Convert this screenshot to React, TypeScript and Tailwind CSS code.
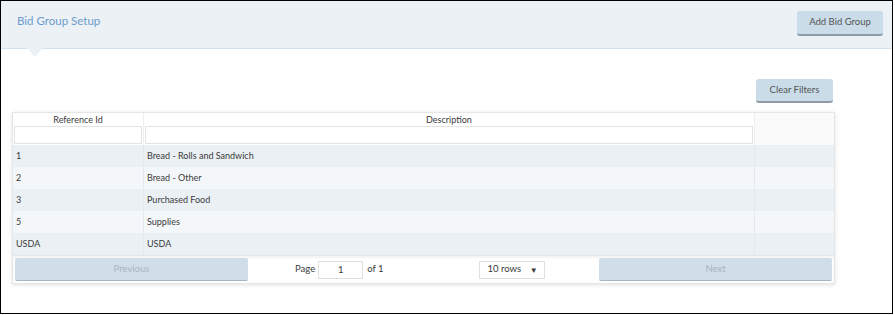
const rows = [
  { id: '1', desc: 'Bread - Rolls and Sandwich' },
  { id: '2', desc: 'Bread - Other' },
  { id: '3', desc: 'Purchased Food' },
  { id: '5', desc: 'Supplies' },
  { id: 'USDA', desc: 'USDA' },
];

export default function App() {
  return (
    <div className="w-[893px] h-[314px] border border-black bg-white font-['Lato','Open_Sans',sans-serif] text-[#3a3a3a]">
      {/* Header */}
      <div className="relative h-[48px] bg-[#ecf1f6] border-b border-[#d5e2ec] flex items-start justify-between pl-[16px] pr-[9px]">
        <h1 className="mt-[11px] text-[11.5px] text-[#6b9ccc]">Bid Group Setup</h1>
        <button className="mt-[10px] h-[25px] w-[86px] rounded-[3px] bg-[#c9dce8] border-b-2 border-[#8e9ba5] text-[9.5px] text-[#555]">
          Add Bid Group
        </button>
        <div className="absolute left-[26px] top-full w-0 h-0 border-l-[8px] border-r-[8px] border-t-[9px] border-l-transparent border-r-transparent border-t-[#ecf1f6]" />
      </div>

      <div className="w-[845px] px-[11px] pt-[30px]">
        <div className="flex justify-end pr-[2px]">
          <button className="h-[24px] w-[77px] rounded-[3px] bg-[#c9dce8] border-b-2 border-[#8e9ba5] text-[9.5px] text-[#555]">
            Clear Filters
          </button>
        </div>

        <div className="mt-[9px] w-[823px] border border-[#e6e6e6] shadow-[0_1px_4px_rgba(0,0,0,0.12)] text-[9px]">
          {/* column headers */}
          <div className="grid grid-cols-[131px_611px_1fr] bg-white">
            <div className="h-[13px] leading-[13px] text-center border-r border-[#eee]">Reference Id</div>
            <div className="h-[13px] leading-[13px] text-center border-r border-[#eee]">Description</div>
            <div className="bg-[#fafafa]" />
          </div>
          {/* filters */}
          <div className="grid grid-cols-[131px_611px_1fr] bg-white">
            <div className="h-[19px] px-[1px] border-r border-[#eee] pb-[1px]">
              <input className="w-full h-full border border-[#e3e3e3] bg-white outline-none" />
            </div>
            <div className="h-[19px] px-[1px] border-r border-[#eee] pb-[1px]">
              <input className="w-full h-full border border-[#e3e3e3] bg-white outline-none" />
            </div>
            <div className="bg-[#fafafa]" />
          </div>
          {/* data rows */}
          {rows.map((r, i) => (
            <div
              key={r.id}
              className={`grid grid-cols-[131px_611px_1fr] h-[22px] items-center ${
                i % 2 === 0 ? 'bg-[#ebf0f5]' : 'bg-[#f4f7fa]'
              }`}
            >
              <div className="h-full flex items-center pl-[3px] border-r border-[#e3e9ef]">{r.id}</div>
              <div className="h-full flex items-center pl-[3px] border-r border-[#e3e9ef]">{r.desc}</div>
              <div />
            </div>
          ))}
          {/* pagination */}
          <div className="flex items-center h-[28px] px-[2px] bg-white border-t border-[#e0e6ec] shadow-[inset_0_2px_3px_rgba(0,0,0,0.05)]">
            <button className="w-[233px] h-[23px] rounded-[2px] bg-[#cfdee8] border-b border-[#a9b6c0] text-[9.5px] text-[#a9b4bd]">
              Previous
            </button>
            <div className="flex-1 flex items-center">
              <div className="ml-[47px] flex items-center gap-[3px] text-[9.5px]">
                <span>Page</span>
                <input
                  readOnly
                  value="1"
                  className="w-[45px] h-[18px] border border-[#e0e0e0] text-center text-[9.5px] outline-none"
                />
                <span className="ml-[1px]">of 1</span>
              </div>
              <div className="ml-[95px] w-[66px] h-[18px] border border-[#e0e0e0] flex items-center justify-between pl-[8px] pr-[6px] text-[9.5px]">
                <span>10 rows</span>
                <span className="text-[8px]">▼</span>
              </div>
            </div>
            <button className="w-[233px] h-[23px] rounded-[2px] bg-[#cfdee8] border-b border-[#a9b6c0] text-[9.5px] text-[#a9b4bd]">
              Next
            </button>
          </div>
        </div>
      </div>
    </div>
  );
}
